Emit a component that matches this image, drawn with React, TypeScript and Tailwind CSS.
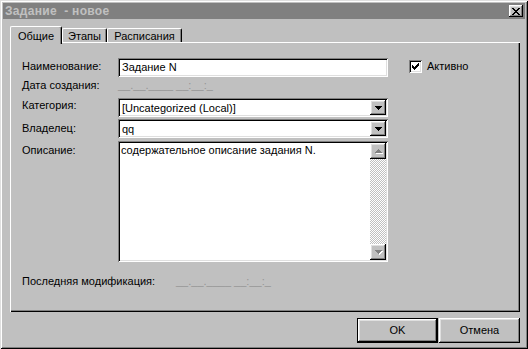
import React from "react";

const RAISED =
  "shadow-[inset_-1px_-1px_#000,inset_1px_1px_#fff,inset_-2px_-2px_#808080,inset_2px_2px_#dfdfdf]";
const SUNKEN =
  "shadow-[inset_1px_1px_#808080,inset_-1px_-1px_#fff,inset_2px_2px_#000,inset_-2px_-2px_#dfdfdf]";

// tiny pixel-art helper for the classic glyphs
function Pixels({ rows, color, shadow }: { rows: string[]; color: string; shadow?: string }) {
  const w = rows[0].length;
  const h = rows.length;
  const rects: React.ReactNode[] = [];
  rows.forEach((r, y) =>
    r.split("").forEach((c, x) => {
      if (c === "X") {
        if (shadow) rects.push(<rect key={`s${x}-${y}`} x={x + 1} y={y + 1} width={1} height={1} fill={shadow} />);
        rects.push(<rect key={`${x}-${y}`} x={x} y={y} width={1} height={1} fill={color} />);
      }
    })
  );
  return (
    <svg width={w + 1} height={h + 1} viewBox={`0 0 ${w + 1} ${h + 1}`} shapeRendering="crispEdges">
      {rects}
    </svg>
  );
}

const CLOSE = ["XX....XX", ".XX..XX.", "..XXXX..", "...XX...", "..XXXX..", ".XX..XX.", "XX....XX"];
const CHECK = ["......X", ".....XX", "X...XXX", "XX.XXX.", "XXXXX..", ".XXX...", "..X...."];
const DOWN = ["XXXXXXX", ".XXXXX.", "..XXX..", "...X..."];
const UP = ["...X...", "..XXX..", ".XXXXX.", "XXXXXXX"];

function ComboBox({ value }: { value: string }) {
  return (
    <div className={`w-[270px] h-[19px] bg-white ${SUNKEN} flex p-[2px]`}>
      <div className="flex-1 pl-[2px] leading-[15px] pt-[1px]">{value}</div>
      <div className={`w-[16px] h-[15px] bg-[#c0c0c0] ${RAISED} flex items-center justify-center pl-[1px] pt-[1px]`}>
        <Pixels rows={DOWN} color="#000" />
      </div>
    </div>
  );
}

function Tab({ label, active, width }: { label: string; active?: boolean; width: string }) {
  return (
    <div
      className={`${width} ${
        active ? "h-[18px] -mb-[2px] z-10 pt-[3px]" : "h-[14px] pt-[1px]"
      } relative bg-[#c0c0c0] border-t border-l border-white border-r border-r-black rounded-t-[2px] shadow-[inset_-1px_0_#808080] flex justify-center leading-[13px]`}
    >
      {label}
    </div>
  );
}

export default function App() {
  return (
    <div
      className={`w-[528px] h-[349px] bg-[#c0c0c0] p-[3px] flex flex-col text-[11px] text-black font-['Liberation_Sans',Arial,sans-serif] shadow-[inset_1px_1px_#dfdfdf,inset_-1px_-1px_#000,inset_2px_2px_#fff,inset_-2px_-2px_#808080]`}
    >
      {/* title bar */}
      <div className="h-[16px] bg-[#808080] flex items-center justify-between pl-[2px] pr-[2px]">
        <span className="font-bold text-[12px] tracking-[0.3px] text-[#c0c0c0] whitespace-pre leading-[16px]">Задание  - новое</span>
        <div className={`w-[14px] h-[12px] bg-[#c0c0c0] ${RAISED} flex items-center justify-center pl-[1px] pt-[1px]`}>
          <Pixels rows={CLOSE} color="#000" />
        </div>
      </div>

      {/* tabs */}
      <div className="mt-[7px] ml-[7px] h-[16px] flex items-end">
        <Tab label="Общие" active width="w-[52px]" />
        <Tab label="Этапы" width="w-[45px]" />
        <Tab label="Расписания" width="w-[75px]" />
      </div>

      {/* tab sheet */}
      <div className="ml-[7px] w-[510px] h-[270px] shadow-[inset_1px_1px_#fff,inset_-1px_-1px_#000,inset_-2px_-2px_#808080] pt-[16px] pl-[12px] flex flex-col">
        <div className="flex h-[19px]">
          <div className="w-[96px] pt-[2px] leading-[13px]">Наименование:</div>
          <div className={`w-[270px] h-[19px] bg-white ${SUNKEN} px-[4px] pt-[3px] leading-[13px]`}>Задание N</div>
          <div className="ml-[21px] mt-[2px] flex items-start">
            <div className={`w-[13px] h-[13px] bg-white ${SUNKEN} flex items-center justify-center pl-[1px] pt-[1px]`}>
              <Pixels rows={CHECK} color="#000" />
            </div>
            <span className="ml-[5px] leading-[13px]">Активно</span>
          </div>
        </div>

        <div className="flex h-[21px] pt-[2px] leading-[13px]">
          <div className="w-[96px]">Дата создания:</div>
          <div className="text-[#959595] whitespace-pre">__.__.____ __:__:_</div>
        </div>

        <div className="flex h-[19px]">
          <div className="w-[96px] pt-[1px] leading-[13px]">Категория:</div>
          <ComboBox value="[Uncategorized (Local)]" />
        </div>

        <div className="flex h-[19px] mt-[2px]">
          <div className="w-[96px] pt-[3px] leading-[13px]">Владелец:</div>
          <ComboBox value="qq" />
        </div>

        <div className="flex h-[121px] mt-[3px]">
          <div className="w-[96px] pt-[3px] leading-[13px]">Описание:</div>
          <div className={`w-[270px] h-[121px] bg-white ${SUNKEN} p-[2px] flex`}>
            <div className="flex-1 pl-[1px] pt-[1px] leading-[13px]">содержательное описание задания N.</div>
            <div className="w-[16px] flex flex-col bg-[image:repeating-conic-gradient(#fff_0_25%,#c0c0c0_0_50%)] bg-[length:2px_2px]">
              <div className={`h-[16px] bg-[#c0c0c0] ${RAISED} flex items-center justify-center pl-[1px]`}>
                <Pixels rows={UP} color="#808080" shadow="#fff" />
              </div>
              <div className="flex-1" />
              <div className={`h-[16px] bg-[#c0c0c0] ${RAISED} flex items-center justify-center pl-[1px] pt-[1px]`}>
                <Pixels rows={DOWN} color="#808080" shadow="#fff" />
              </div>
            </div>
          </div>
        </div>

        <div className="flex mt-[13px] leading-[13px]">
          <div className="w-[154px]">Последняя модификация:</div>
          <div className="text-[#959595] whitespace-pre">__.__.____ __:__:_</div>
        </div>
      </div>

      {/* buttons */}
      <div className="mt-[6px] flex justify-end gap-[1px] pr-[5px]">
        <div className="w-[81px] h-[25px] border border-black">
          <div className={`w-full h-full bg-[#c0c0c0] ${RAISED} flex items-center justify-center`}>OK</div>
        </div>
        <div className={`w-[81px] h-[25px] bg-[#c0c0c0] ${RAISED} flex items-center justify-center`}>Отмена</div>
      </div>
    </div>
  );
}
